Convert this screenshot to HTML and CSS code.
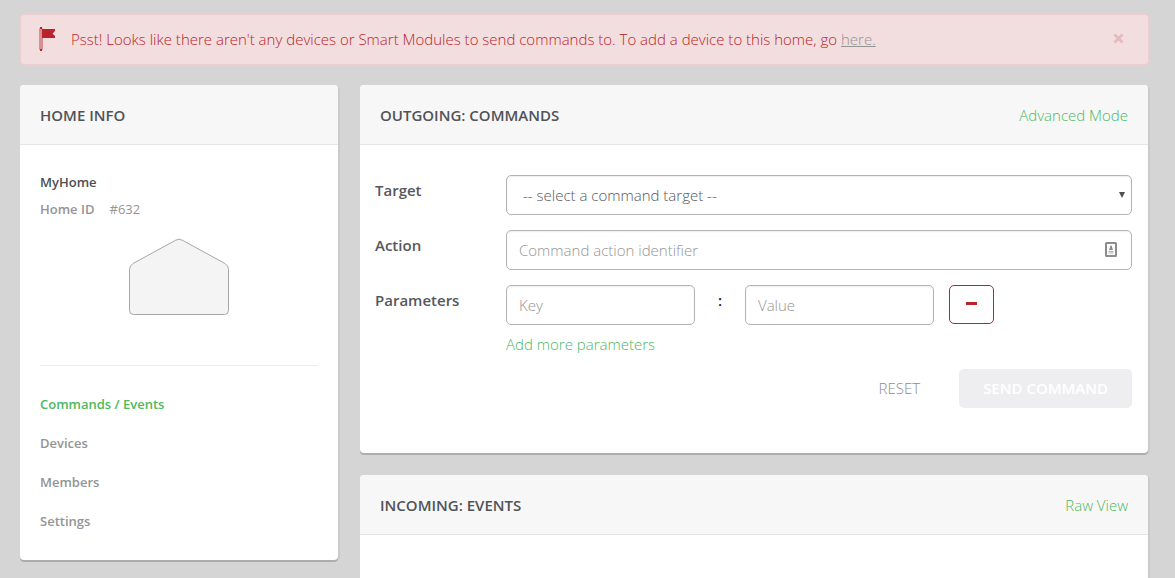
FILE: index.html
```html
<!DOCTYPE html>
<html lang="en">
<head>
<meta charset="utf-8">
<title>MyHome - Commands / Events</title>
<link rel="stylesheet" href="styles.css">
</head>
<body>
<div class="page">
  <div class="alert" role="alert">
    <svg class="alert-flag" width="17" height="24" viewBox="0 0 17 24" aria-hidden="true">
      <rect x="0" y="1" width="4" height="22" rx="1" fill="#da9093"/>
      <rect x="1" y="0" width="2" height="2" fill="#b9242b"/>
      <rect x="1" y="22" width="2" height="2" fill="#b9242b"/>
      <path d="M3 2H16V4L13.500 6.500L16 9V11H3Z" fill="#b9242b"/>
    </svg>
    <p class="alert-text">Psst! Looks like there aren't any devices or Smart Modules to send commands to. To add a device to this home, go <a class="alert-link" href="#">here.</a></p>
    <button class="alert-close" type="button" aria-label="Close">
      <svg width="11" height="11" viewBox="0 0 11 11" aria-hidden="true"><path d="M1.5 1.5L9.5 9.5M9.5 1.5L1.5 9.5" stroke="currentColor" stroke-width="2.8"/></svg>
    </button>
  </div>

  <div class="columns">
    <aside class="card">
      <header class="card-header"><h2 class="card-title">HOME INFO</h2></header>
      <div class="home">
        <h3 class="home-name">MyHome</h3>
        <p class="home-id"><b>Home ID</b><span>#632</span></p>
        <svg class="home-shape" width="100" height="78" viewBox="0 0 100 78" aria-hidden="true">
          <path d="M4 25.500L46.500 2.300Q50 0 53.500 2.300L96 25.500Q99.500 27.800 99.500 31.500V72.500Q99.500 76.500 95.500 76.500H4.500Q.5 76.500 .5 72.500V31.500Q.5 27.800 4 25.500Z" fill="#f4f4f4" stroke="#a6a6a6"/>
        </svg>
        <nav class="home-nav">
          <a class="nav-link nav-link-active" href="#">Commands / Events</a>
          <a class="nav-link" href="#">Devices</a>
          <a class="nav-link" href="#">Members</a>
          <a class="nav-link" href="#">Settings</a>
        </nav>
      </div>
    </aside>

    <main class="main">
      <section class="card">
        <header class="card-header">
          <h2 class="card-title">OUTGOING: COMMANDS</h2>
          <a class="text-link" href="#">Advanced Mode</a>
        </header>
        <form class="form">
          <label class="label" for="target">Target</label>
          <select class="control select" id="target"><option>-- select a command target --</option></select>

          <label class="label" for="action">Action</label>
          <div class="action-field">
            <input class="control" id="action" type="text" placeholder="Command action identifier">
            <svg class="autofill" width="12" height="15" viewBox="0 0 12 15" aria-hidden="true">
              <rect x="1" y="1" width="10" height="13" rx=".5" fill="#fff" stroke="#8c8c8c" stroke-width="2"/>
              <circle cx="6" cy="4.500" r="1" fill="#8c8c8c"/>
              <path d="M5 5H7L8 8H4Z" fill="#8c8c8c"/>
              <path d="M3.500 9.500H8.500M3.500 11H8.500" stroke="#b0b0b0"/>
            </svg>
          </div>

          <label class="label" for="key">Parameters</label>
          <div>
            <div class="params">
              <input class="control" id="key" type="text" placeholder="Key">
              <span class="colon">:</span>
              <input class="control" type="text" placeholder="Value" aria-label="Value">
              <button class="remove" type="button" aria-label="Remove parameter">
                <svg width="11" height="3" viewBox="0 0 11 3" aria-hidden="true"><rect width="11" height="3" fill="#b9242b"/></svg>
              </button>
            </div>
            <a class="text-link add-link" href="#">Add more parameters</a>
          </div>

          <div class="actions">
            <button class="reset" type="reset">RESET</button>
            <button class="send" type="submit" disabled>SEND COMMAND</button>
          </div>
        </form>
      </section>

      <section class="card">
        <header class="card-header">
          <h2 class="card-title">INCOMING: EVENTS</h2>
          <a class="text-link" href="#">Raw View</a>
        </header>
        <div class="events"></div>
      </section>
    </main>
  </div>
</div>
</body>
</html>
```
FILE: styles.css
```css
* { box-sizing: border-box; }

body {
  margin: 0;
  background: #d5d5d5;
  color: #55585c;
  font-family: "Open Sans", "Noto Sans", sans-serif;
  font-size: 15px;
  font-weight: 340;
  line-height: 20px;
}

h2, h3, p { margin: 0; }
a { text-decoration: none; }

input, select, button {
  font: inherit;
  color: inherit;
}

.page { padding: 14px 26px 20px 20px; }

.alert {
  display: flex;
  align-items: center;
  min-height: 51px;
  padding: 0 24px 2px 18px;
  border: 1px solid #edcdcf;
  border-radius: 4px;
  background: #f2dede;
  color: #b9242b;
}

.alert-flag { flex: none; margin-right: 15px; }
.alert-text { flex: 1; }
.alert-link { color: #949494; text-decoration: underline; }

.alert-close {
  display: flex;
  padding: 0;
  border: 0;
  background: none;
  color: #e6babd;
}

.columns {
  display: grid;
  grid-template-columns: 318px minmax(0, 1fr);
  gap: 22px;
  align-items: start;
  margin: 20px 1px 0 0;
}

.main { display: grid; gap: 22px; }

.card {
  border-radius: 4px;
  background: #fff;
  box-shadow: 0 2px 0 #adadad, 2px 1px 0 #cbcbcb;
}

.card-header {
  display: flex;
  align-items: center;
  justify-content: space-between;
  min-height: 60px;
  padding: 0 20px;
  border-bottom: 1px solid #e5e5e5;
  border-radius: 4px 4px 0 0;
  background: #f7f7f7;
}

.card-title {
  color: #505357;
  font-size: 15px;
  font-weight: 600;
}

.text-link { color: #4db860; }

.home {
  padding: 27px 20px 19px;
  font-size: 13px;
}

.home-name {
  color: #4c4f54;
  font-size: 13px;
  font-weight: 600;
}

.home-id {
  display: flex;
  gap: 15px;
  margin-top: 7px;
  color: #949494;
  font-weight: 400;
}

.home-id b { font-weight: 600; }

.home-shape { display: block; margin: 19px auto 49px; }

.home-nav {
  display: flex;
  flex-direction: column;
  gap: 19px;
  padding: 28px 0 10px;
  border-top: 1px solid #ebebeb;
}

.nav-link { color: #949494; font-weight: 600; }
.nav-link-active { color: #4db860; }

.form {
  display: grid;
  grid-template-columns: 116px minmax(0, 1fr);
  gap: 15px;
  padding: 30px 16px 45px 15px;
}

.label {
  padding-top: 5px;
  font-weight: 600;
}

.control {
  width: 100%;
  min-width: 0;
  height: 40px;
  padding: 0 12px;
  border: 1px solid #b4b4b4;
  border-radius: 5px;
  background-color: #fff;
  box-shadow: inset 0 1px 2px #eeeeee;
}

.control::placeholder { color: #949494; opacity: 1; }

.select {
  appearance: none;
  padding-left: 16px;
  background-image: url("data:image/svg+xml,%3Csvg xmlns='http://www.w3.org/2000/svg' width='6' height='6'%3E%3Cpath d='M0 0H6L3 6Z' fill='%23505050'/%3E%3C/svg%3E");
  background-repeat: no-repeat;
  background-position: right 6px center;
}

.action-field { position: relative; }

.autofill {
  position: absolute;
  top: 12px;
  right: 15px;
}

.params {
  display: grid;
  grid-template-columns: minmax(0, 189fr) 50px minmax(0, 189fr) 60px minmax(0, 138fr);
}

.colon {
  padding-top: 5px;
  color: #222;
  font-weight: 600;
  text-align: center;
}

.remove {
  display: flex;
  align-items: center;
  justify-content: center;
  width: 45px;
  height: 39px;
  margin-left: 15px;
  padding: 0 0 2px;
  border: 1px solid #b9242b;
  border-radius: 5px;
  background: #fff;
}

.add-link { display: inline-block; margin-top: 9px; }

.actions {
  grid-column: 1 / -1;
  display: flex;
  justify-content: flex-end;
  gap: 15px;
}

.reset, .send {
  height: 39px;
  padding: 0 24px 2px;
  border: 0;
  border-radius: 5px;
}

.reset {
  background: none;
  color: #8c8c94;
}

.send {
  background: #eeeef0;
  color: #fff;
  font-weight: 600;
}

.events { min-height: 60px; }
```
